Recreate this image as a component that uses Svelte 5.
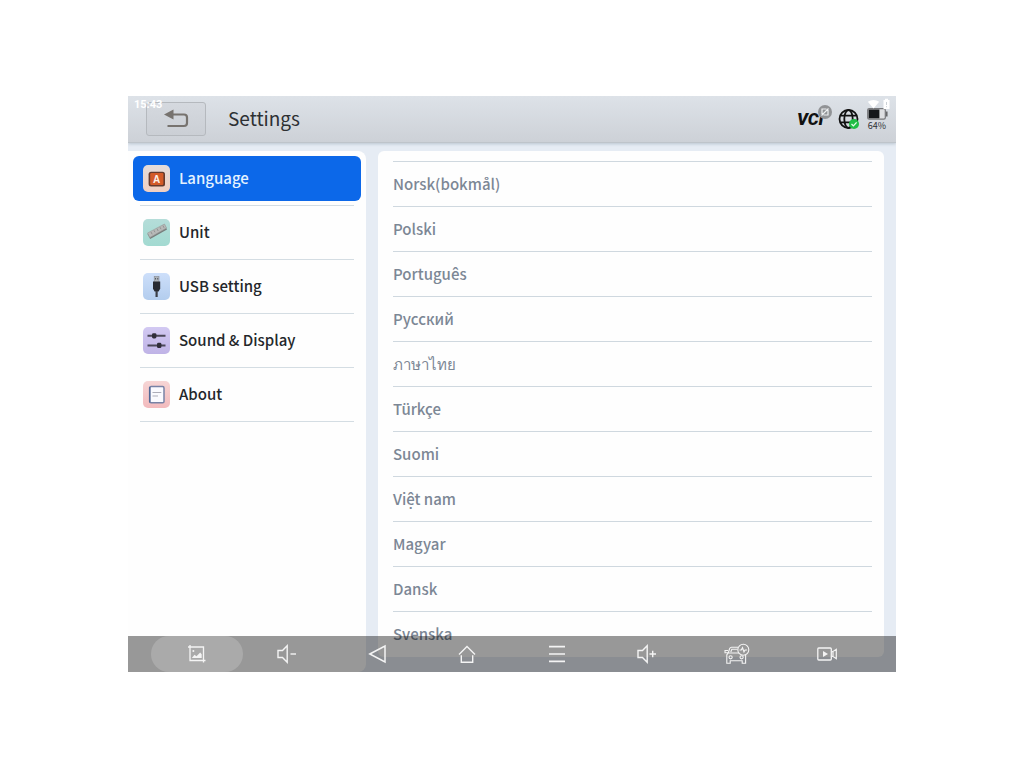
<script>
  let section = $state('Language');
  let chosen = $state('');
  const sections = ['Language', 'Unit', 'USB setting', 'Sound & Display', 'About'];
  const languages = ['Norsk(bokmål)', 'Polski', 'Português', 'Русский', 'ภาษาไทย', 'Türkçe', 'Suomi', 'Việt nam', 'Magyar', 'Dansk', 'Svenska'];
  const system = ['Screenshot', 'Volume down', 'Back', 'Home', 'Recent apps', 'Volume up', 'Vehicle diagnostics', 'Screen recorder'];
</script>

{#snippet sectionIcon(name)}
  <svg class="tile" viewBox="0 0 27 27" aria-hidden="true">
    <defs>
      <linearGradient id="g-lang" x2="0" y2="1"><stop stop-color="#e3dcda" /><stop offset="1" stop-color="#f1cfc1" /></linearGradient>
      <linearGradient id="g-unit" x2="0" y2="1"><stop stop-color="#b5ddd9" /><stop offset="1" stop-color="#a2dad1" /></linearGradient>
      <linearGradient id="g-usb" x2="0" y2="1"><stop stop-color="#cddffa" /><stop offset="1" stop-color="#b3cdee" /></linearGradient>
      <linearGradient id="g-sound" x2="0" y2="1"><stop stop-color="#d2c9f2" /><stop offset="1" stop-color="#bfb3e6" /></linearGradient>
      <linearGradient id="g-about" x2="0" y2="1"><stop stop-color="#f6d5d5" /><stop offset="1" stop-color="#f2babd" /></linearGradient>
    </defs>
    {#if name === 'Language'}
      <rect width="27" height="27" rx="5" fill="url(#g-lang)" />
      <rect x="5.6" y="6.7" width="16.4" height="14.8" rx="2.5" fill="#653a2d" />
      <rect x="7.2" y="8" width="13.2" height="12" rx="1.2" fill="#d35a28" />
      <text x="13.7" y="17.6" text-anchor="middle">A</text>
    {:else if name === 'Unit'}
      <rect width="27" height="27" rx="5" fill="url(#g-unit)" />
      <path d="M4.5 15 21.5 5.5 24 10.5 7.2 20Z" fill="#777c7b" />
      <path d="M4.5 14 21.5 5 23.5 9 6.8 18.6Z" fill="#b8b9b8" stroke="#999c9b" stroke-width=".6" />
      <path d="m8 13 1.2 2.3M11 11.3l1 2M14 9.7l1.2 2.3M17 8.2l1 2M20 6.6l1 2.2" stroke="#858a89" stroke-width=".8" />
    {:else if name === 'USB setting'}
      <rect width="27" height="27" rx="5" fill="url(#g-usb)" />
      <rect x="11.2" y="3.4" width="4.8" height="6" fill="#aeb3b9" stroke="#858b94" stroke-width=".6" />
      <path d="M12.5 5v1.5M14.7 5v1.5" stroke="#555c65" stroke-width="1" />
      <path d="M10 8.5h7.2v7.2l-1.6 2.8h-4L10 15.7Z" fill="#282a31" />
      <path d="M13.6 18v6" stroke="#3b3e47" stroke-width="2.2" />
    {:else if name === 'Sound & Display'}
      <rect width="27" height="27" rx="5" fill="url(#g-sound)" />
      <path d="M4.5 8.8h18M4.5 18.5h18" stroke="#4b4858" stroke-width="2.1" />
      <rect x="9" y="6.2" width="4.4" height="5.3" rx="1.4" fill="#302e3a" />
      <rect x="14" y="15.8" width="4.4" height="5.3" rx="1.4" fill="#302e3a" />
    {:else}
      <rect width="27" height="27" rx="5" fill="url(#g-about)" />
      <rect x="6.7" y="5.6" width="14.3" height="16.2" rx="1.4" fill="#fafaff" stroke="#7882a6" stroke-width="1.5" />
      <path d="M6.7 6v15.5" stroke="#526896" stroke-width="1.5" />
      <path d="M9.5 11.5h8.8M9.5 15h5.5" stroke="#adadb9" stroke-width="1" />
    {/if}
  </svg>
{/snippet}

{#snippet systemIcon(name)}
  <svg class="glyph" viewBox="0 0 28 24" aria-hidden="true">
    {#if name === 'Screenshot'}
      <path d="M7 3v15.5h15.5M5 5h15.5v15.5" stroke-width="1.3" />
      <path class="solid" d="m8.8 16 2.7-3.2 2 1.4 3.7-3.8 1.5 1.8V16Z" />
      <circle class="solid" cx="10.4" cy="9" r="1" />
    {:else if name === 'Volume down' || name === 'Volume up'}
      <path d="M5 8.5h4.5l4.7-4.7v16.4l-4.7-4.7H5Z" />
      <path d={name === 'Volume up' ? 'M16.5 12h6.5M19.7 8.7v6.6' : 'M17.5 12h5.5'} />
    {:else if name === 'Back'}
      <path d="M6.8 12 22 4v16Z" stroke-width="1.5" />
    {:else if name === 'Home'}
      <path d="M6 12.5 14 4.5l8 8M8.3 13.2v7h11.4v-7" />
    {:else if name === 'Recent apps'}
      <path d="M6 4.7h16M6 12h16M6 19.3h16" stroke-width="1.7" />
    {:else if name === 'Vehicle diagnostics'}
      <g stroke-width="1.1">
        <path d="M15 5.2H8.5q-1.3 0-1.8 1.3L5.2 11 3.8 12.8v8.4h3.4v-2.4h12v2.4h3.4v-8.4M5.2 11H16M5 8.5H2v2.2h2.8M7.8 10l1-2.7h5.5" />
        <circle cx="7.6" cy="15.3" r="1.6" /><circle cx="18.6" cy="15.3" r="1.6" />
        <circle cx="20.3" cy="7.7" r="5.5" />
        <path d="M16.5 8h1.8l1.2-2.3 1.5 4.2 1.1-1.9h2" />
      </g>
    {:else}
      <rect x="4.8" y="6" width="13.5" height="12" rx="1" stroke-width="1.3" />
      <path d="M18.5 9.7h1.2l3.6-2.4v9.4l-3.6-2.4h-1.2M20 10v4" stroke-width="1.2" />
      <path class="solid" d="m10 9 5 3-5 3Z" />
    {/if}
  </svg>
{/snippet}

<div class="page">
  <div class="device">
    <header>
      <button class="back" aria-label="Go back">
        <svg viewBox="0 0 26 20" aria-hidden="true">
          <path d="M9 5.5h12q3 0 3 3v5.5q0 3-3 3H4.5" fill="none" stroke="#77736f" stroke-width="2.2" />
          <path d="M1 5.5 10.5.5v10Z" fill="#77736f" />
        </svg>
      </button>
      <h1>Settings</h1>
      <div class="indicators">
        <div class="vci">
          <span>VCI</span>
          <svg viewBox="0 0 14 14" role="img" aria-label="Disconnected">
            <circle cx="7" cy="7" r="7" fill="#919396" />
            <path d="M4 9V4h4.5M10 5v5H5.5M3.5 10.5l7-7" fill="none" stroke="#eef0f2" stroke-width="1.2" />
          </svg>
        </div>
        <svg class="globe" viewBox="0 0 22 22" role="img" aria-label="Network connected">
          <g fill="none" stroke="#111" stroke-width="1.8">
            <circle cx="10.5" cy="11" r="9" /><ellipse cx="10.5" cy="11" rx="4.2" ry="9" />
            <path d="M2.5 7.6h16M2.5 14.4h16" />
          </g>
          <circle cx="16" cy="16" r="5" fill="#20bd45" />
          <path d="m13.5 16 1.9 1.9 3.2-3.5" fill="none" stroke="#e7ffeb" stroke-width="1.3" />
        </svg>
        <div class="power">
          <svg viewBox="0 0 21 12" aria-hidden="true">
            <rect x=".7" y=".7" width="17.6" height="10.4" rx="1.4" fill="#dedfe2" stroke="#77787b" stroke-width="1.2" />
            <path d="M1.6 1.5h10.8v8.8H1.6Z" fill="#15171a" /><path d="M19.7 3.5v5" stroke="#66676a" stroke-width="1.7" />
          </svg>
          <span>64%</span>
        </div>
      </div>
      <div class="status">
        <time>15:43</time>
        <svg viewBox="0 0 24 12" aria-hidden="true">
          <path d="M.8 3.8Q6.5 0 12.2 3.8L6.5 10.5Z" fill="#fff" />
          <path d="M16.5 2H18V.8h3V2h1.5v9h-6Z" fill="#fff" /><path d="M19.5 4v3M19.5 8.2v1" stroke="#cbd0d5" />
        </svg>
      </div>
    </header>

    <div class="content">
      <nav class="sections" aria-label="Settings sections">
        <ul>
          {#each sections as name}
            <li>
              <button class:current={section === name} aria-current={section === name ? 'page' : undefined} onclick={() => (section = name)}>
                {@render sectionIcon(name)}
                <span>{name}</span>
              </button>
            </li>
          {/each}
        </ul>
      </nav>
      <main>
        <ul>
          {#each languages as name}
            <li><button aria-pressed={chosen === name} onclick={() => (chosen = name)}>{name}</button></li>
          {/each}
        </ul>
      </main>
    </div>

    <nav class="system" aria-label="System">
      {#each system as name, i}
        <button class:active={i === 0} aria-label={name}>{@render systemIcon(name)}</button>
      {/each}
    </nav>
  </div>
</div>

<style>
  :global(body) { background: #fff; }
  .page {
    box-sizing: border-box;
    min-height: 100vh;
    padding: 96px 12.5%;
    font-family: "Noto Sans CJK SC", "Noto Sans", sans-serif;
  }
  .device {
    position: relative;
    display: flex;
    flex-direction: column;
    height: calc(100vh - 192px);
    overflow: hidden;
    background: #e6ecf4;
  }
  button { margin: 0; padding: 0; border: 0; background: none; font: inherit; color: inherit; cursor: pointer; }
  ul { margin: 0; padding: 0; list-style: none; }
  svg { display: block; }
  header {
    position: relative;
    z-index: 1;
    flex: none;
    display: flex;
    align-items: center;
    height: 47px;
    padding: 0 8px 0 18px;
    box-sizing: border-box;
    background: linear-gradient(#dde2e8, #cdd1d7);
    border-bottom: 1px solid #bec4ca;
    box-shadow: 0 1px 3px #b9c4cf;
  }
  .back {
    display: grid;
    place-items: center;
    width: 60px;
    height: 34px;
    box-sizing: border-box;
    border: 1px solid #b5b9be;
    border-radius: 3px;
    background: linear-gradient(#d5d9df, #cbcfd5);
  }
  .back svg { width: 26px; height: 20px; }
  h1 { margin: 0 0 0 22px; padding-bottom: 2px; font-size: 19px; line-height: 28px; font-weight: 400; color: #2d3033; }
  .indicators { display: flex; align-items: center; gap: 6px; margin-left: auto; }
  .vci {
    position: relative;
    width: 35px;
    font: italic 900 17px/20px Roboto, sans-serif;
    color: #111;
  }
  .vci svg { position: absolute; top: -4px; right: 0; width: 14px; height: 14px; }
  .globe { width: 22px; height: 22px; }
  .power { display: flex; flex-direction: column; align-items: center; gap: 1px; width: 22px; }
  .power svg { width: 21px; height: 12px; }
  .power span { font-size: 9px; line-height: 10px; color: #303236; }
  .status {
    position: absolute;
    inset: 2px 5px auto 6px;
    display: flex;
    justify-content: space-between;
    pointer-events: none;
    font: 700 11px/14px Roboto, sans-serif;
    color: #fff;
  }
  .status svg { width: 24px; height: 12px; }
  .content { flex: 1; min-height: 0; display: flex; gap: 12px; padding: 8px 12px 0 0; }
  .sections {
    flex: 0 0 238px;
    box-sizing: border-box;
    padding: 5px 12px;
    border-radius: 0 8px 8px 0;
    background: #fefefe;
  }
  .sections li { border-bottom: 1px solid #d4dde3; }
  .sections li:first-child { padding-bottom: 4px; }
  .sections button {
    display: flex;
    align-items: center;
    gap: 9px;
    width: 100%;
    height: 53px;
    padding: 0 3px;
    font-size: 15px;
    font-weight: 500;
    line-height: 22px;
    text-align: left;
    color: #24272b;
  }
  .sections span { padding-bottom: 2px; }
  .sections li:first-child button { height: 45px; }
  .sections .current {
    width: calc(100% + 14px);
    margin: 0 -7px;
    padding: 0 10px;
    border-radius: 6px;
    background: #0c68e9;
    color: #e4f2ff;
  }
  .tile { flex: none; width: 27px; height: 27px; }
  .tile text { font: 700 10px "Liberation Sans", sans-serif; fill: #fff0e8; }
  main {
    flex: 1;
    min-width: 0;
    margin-bottom: 15px;
    padding: 10px 12px 0 15px;
    border-radius: 6px;
    background: #fefefe;
    overflow: hidden;
  }
  main li { border-top: 1px solid #cfd8df; }
  main button {
    width: 100%;
    height: 44px;
    font-size: 15px;
    font-weight: 500;
    line-height: 22px;
    text-align: left;
    color: #7c8795;
  }
  .system {
    position: absolute;
    inset: auto 0 0;
    z-index: 2;
    display: grid;
    grid-template-columns: repeat(8, minmax(0, 1fr));
    height: 36px;
    padding: 0 24px;
    background: rgb(0 0 0 / 40%);
  }
  .system button { display: grid; place-items: center; height: 36px; }
  .system .active { margin: 0 -1px; border-radius: 18px; background: rgb(255 255 255 / 18%); }
  .glyph { width: 28px; height: 24px; fill: none; stroke: #f4f4f4; stroke-width: 1.4; }
  .glyph .solid { fill: #f4f4f4; stroke: none; }
</style>
